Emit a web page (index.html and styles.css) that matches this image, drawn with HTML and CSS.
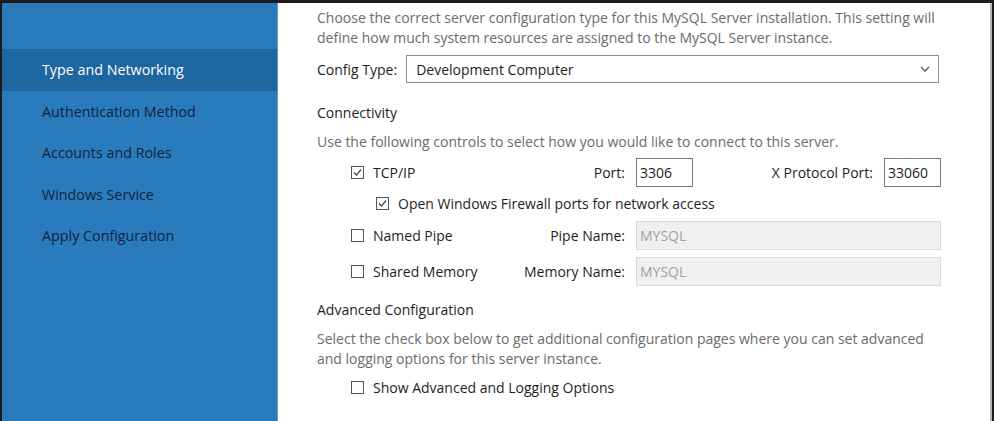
FILE: index.html
```html
<!DOCTYPE html>
<html lang="en">
<head>
<meta charset="utf-8">
<title>MySQL Server Configuration</title>
<link rel="stylesheet" href="styles.css">
</head>
<body>
<div class="window">
  <nav class="sidebar">
    <div class="nav-item active">Type and Networking</div>
    <div class="nav-item">Authentication Method</div>
    <div class="nav-item">Accounts and Roles</div>
    <div class="nav-item">Windows Service</div>
    <div class="nav-item">Apply Configuration</div>
  </nav>
  <main class="content">
    <p class="desc intro">Choose the correct server configuration type for this MySQL Server installation. This setting will define how much system resources are assigned to the MySQL Server instance.</p>
    <div class="config-row">
      <span class="label">Config Type:</span>
      <div class="select">
        <span>Development Computer</span>
        <svg class="chev" width="10" height="6" viewBox="0 0 10 6"><path d="M1 1 L5 5 L9 1" fill="none" stroke="#555" stroke-width="1.3"/></svg>
      </div>
    </div>

    <h2 class="heading conn">Connectivity</h2>
    <p class="desc conn-desc">Use the following controls to select how you would like to connect to this server.</p>

    <div class="conn-grid">
      <div class="row tcp">
        <label class="check"><span class="box checked"><svg width="11" height="11" viewBox="0 0 11 11"><path d="M2 5.5 L4.5 8 L9 2.5" fill="none" stroke="#444" stroke-width="1.2"/></svg></span>TCP/IP</label>
        <span class="field-label">Port:</span>
        <div class="ports">
          <span class="input small">3306</span>
          <span class="field-label xport">X Protocol Port:</span>
          <span class="input small">33060</span>
        </div>
      </div>
      <div class="row firewall">
        <label class="check"><span class="box checked"><svg width="11" height="11" viewBox="0 0 11 11"><path d="M2 5.5 L4.5 8 L9 2.5" fill="none" stroke="#444" stroke-width="1.2"/></svg></span>Open Windows Firewall ports for network access</label>
      </div>
      <div class="row pipe">
        <label class="check"><span class="box"></span>Named Pipe</label>
        <span class="field-label">Pipe Name:</span>
        <span class="input disabled">MYSQL</span>
      </div>
      <div class="row shm">
        <label class="check"><span class="box"></span>Shared Memory</label>
        <span class="field-label">Memory Name:</span>
        <span class="input disabled">MYSQL</span>
      </div>
    </div>

    <h2 class="heading adv">Advanced Configuration</h2>
    <p class="desc adv-desc">Select the check box below to get additional configuration pages where you can set advanced and logging options for this server instance.</p>
    <div class="adv-row">
      <label class="check"><span class="box"></span>Show Advanced and Logging Options</label>
    </div>
  </main>
</div>
</body>
</html>
```

FILE: styles.css
```css
html, body {
  margin: 0;
  padding: 0;
  height: 100%;
  background: #1c1c1c;
  overflow: hidden;
}

body {
  font-family: "Open Sans", "Noto Sans", "Liberation Sans", sans-serif;
  font-size: 14px;
  color: #1e1e1e;
}

.window {
  display: flex;
  margin: 3px 2px 0 2px;
  height: 418px;
}

.sidebar {
  width: 276px;
  background: #2a7bbb;
  padding-top: 46px;
  display: flex;
  flex-direction: column;
  box-sizing: border-box;
  border-right: 1px solid #5a9ccf;
}

.nav-item {
  height: 41.5px;
  line-height: 41.5px;
  padding-left: 40px;
  color: #10243f;
  font-size: 14.3px;
}

.nav-item.active {
  background: #1d669f;
  color: #ffffff;
}

.content {
  flex: 1;
  background: #ffffff;
  border-right: 2px solid #b4b4b4;
  padding: 5px 0 0 39px;
  box-sizing: border-box;
}

.desc {
  margin: 0;
  color: #6b6b6b;
  line-height: 20px;
}

.intro {
  width: 650px;
}

.heading {
  margin: 0;
  font-size: 14px;
  font-weight: normal;
  line-height: 20px;
  color: #1e1e1e;
}

.config-row {
  display: flex;
  align-items: center;
  gap: 9px;
  margin-top: 7px;
  height: 28px;
}

.select {
  width: 533px;
  height: 28px;
  box-sizing: border-box;
  border: 1px solid #8c8c8c;
  display: flex;
  align-items: center;
  justify-content: space-between;
  padding: 0 8px 0 9px;
}

.conn {
  margin-top: 20px;
}

.conn-desc {
  margin-top: 9px;
}

.conn-grid {
  margin-top: 6px;
  padding-left: 34px;
}

.row {
  display: grid;
  grid-template-columns: 140px 123px 305px;
  column-gap: 11px;
  align-items: center;
  height: 29px;
}

.row.firewall {
  display: flex;
  height: 33px;
  padding-left: 25px;
  padding-bottom: 1px;
}

.row.shm {
  margin-top: 7px;
}

.check {
  display: flex;
  align-items: center;
  gap: 9px;
  white-space: nowrap;
}

.box {
  width: 13px;
  height: 13px;
  box-sizing: border-box;
  border: 1px solid #555;
  display: flex;
  align-items: center;
  justify-content: center;
  background: #fff;
}

.box svg {
  display: block;
}

.field-label {
  text-align: right;
  white-space: nowrap;
}

.ports {
  display: flex;
  align-items: center;
}

.xport {
  margin-left: auto;
  margin-right: 11px;
}

.input {
  height: 29px;
  box-sizing: border-box;
  border: 1px solid #7a7a7a;
  display: flex;
  align-items: center;
  padding-left: 3px;
}

.input.small {
  width: 57px;
}

.input.disabled {
  background: #f0f0f0;
  border-color: #dadada;
  color: #a2a2a2;
}

.adv {
  margin-top: 14px;
}

.adv-desc {
  margin-top: 9px;
  width: 615px;
}

.adv-row {
  margin-top: 8px;
  padding-left: 34px;
  height: 20px;
  display: flex;
  align-items: center;
}
```
